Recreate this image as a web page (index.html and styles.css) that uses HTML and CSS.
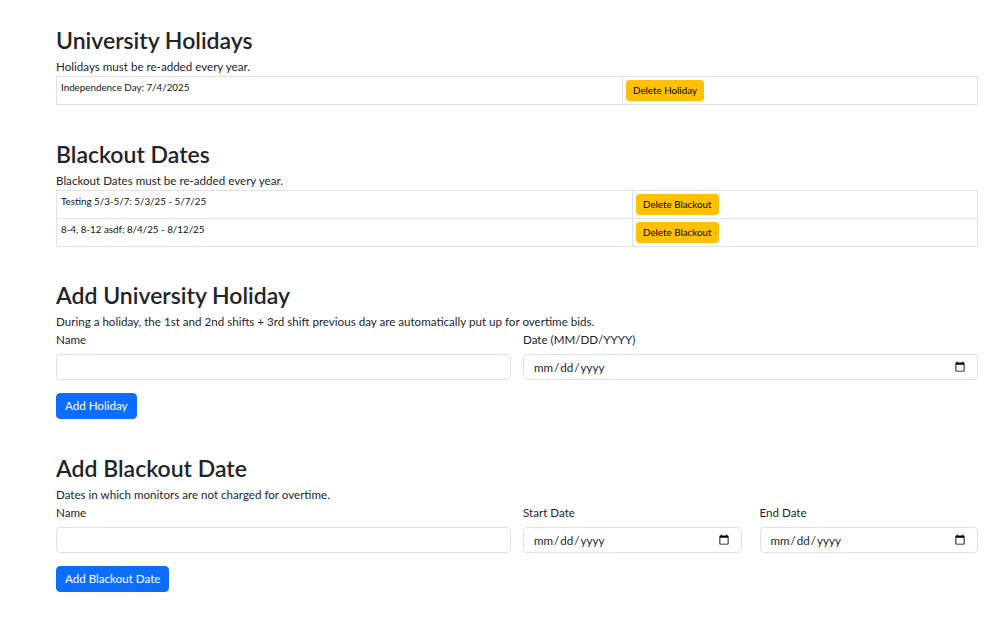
FILE: index.html
```html
<!DOCTYPE html>
<html lang="en">
<head>
<meta charset="utf-8">
<title>Holidays</title>
<link rel="stylesheet" href="styles.css">
</head>
<body>
<main class="container">
  <section class="block">
    <h2>University Holidays</h2>
    <p class="note">Holidays must be re-added every year.</p>
    <table class="list">
      <tr>
        <td class="c-holiday">Independence Day: 7/4/2025</td>
        <td><button class="btn btn-warn">Delete Holiday</button></td>
      </tr>
    </table>
  </section>

  <section class="block">
    <h2>Blackout Dates</h2>
    <p class="note">Blackout Dates must be re-added every year.</p>
    <table class="list">
      <tr>
        <td class="c-blackout">Testing 5/3-5/7: 5/3/25 - 5/7/25</td>
        <td><button class="btn btn-warn">Delete Blackout</button></td>
      </tr>
      <tr>
        <td class="c-blackout">8-4, 8-12 asdf: 8/4/25 - 8/12/25</td>
        <td><button class="btn btn-warn">Delete Blackout</button></td>
      </tr>
    </table>
  </section>

  <section class="block block-tight">
    <h2>Add University Holiday</h2>
    <p class="note">During a holiday, the 1st and 2nd shifts + 3rd shift previous day are automatically put up for overtime bids.</p>
    <form class="form">
      <div class="row two">
        <div class="field">
          <label for="hname">Name</label>
          <input id="hname" class="control" type="text">
        </div>
        <div class="field">
          <label for="hdate">Date (MM/DD/YYYY)</label>
          <input id="hdate" class="control" type="date">
        </div>
      </div>
      <button type="button" class="btn btn-primary">Add Holiday</button>
    </form>
  </section>

  <section class="block">
    <h2>Add Blackout Date</h2>
    <p class="note">Dates in which monitors are not charged for overtime.</p>
    <form class="form">
      <div class="row two">
        <div class="field">
          <label for="bname">Name</label>
          <input id="bname" class="control" type="text">
        </div>
        <div class="row pair">
          <div class="field">
            <label for="bstart">Start Date</label>
            <input id="bstart" class="control" type="date">
          </div>
          <div class="field">
            <label for="bend">End Date</label>
            <input id="bend" class="control" type="date">
          </div>
        </div>
      </div>
      <button type="button" class="btn btn-primary">Add Blackout Date</button>
    </form>
  </section>
</main>
</body>
</html>
```

FILE: styles.css
```css
* { box-sizing: border-box; }

html, body {
  margin: 0;
  background: #ffffff;
}

body {
  font-family: Lato, "Noto Sans", "Liberation Sans", sans-serif;
  font-size: 11.6px;
  line-height: 1.5;
  color: #212529;
}

.container {
  width: 922px;
  margin-left: 56px;
  padding-top: 26px;
}

.block {
  margin-bottom: 35px;
}

.block-tight {
  margin-top: -1px;
}

h2 {
  margin: 0;
  font-size: 23px;
  font-weight: 600;
  line-height: 29px;
}

.note {
  margin: 2px 0 0 0;
  line-height: 19px;
}

.list {
  width: 100%;
  border-collapse: collapse;
  font-size: 9.8px;
  line-height: 15px;
  color: #111;
}

.list td {
  border: 1px solid #dee2e6;
  padding: 3px 3px 3px 3px;
  vertical-align: top;
}

.list td:first-child {
  padding-left: 4px;
  padding-top: 3px;
}

.c-holiday { width: 566px; }
.c-blackout { width: 576px; }

.btn {
  display: inline-block;
  font-family: inherit;
  border: 1px solid transparent;
  cursor: pointer;
}

.btn-warn {
  background: #ffc107;
  border-color: #ffc107;
  color: #000;
  font-size: 9.8px;
  line-height: 15px;
  height: 21px;
  padding: 2px 6px;
  border-radius: 3px;
  vertical-align: top;
}

.btn-primary {
  background: #0d6efd;
  border-color: #0d6efd;
  color: #fff;
  font-size: 11.6px;
  line-height: 18px;
  height: 26px;
  padding: 3px 8px;
  border-radius: 4px;
}

.form {
  margin: 0;
}

.row {
  display: grid;
}

.two {
  grid-template-columns: 1fr 1fr;
  column-gap: 12px;
}

.pair {
  grid-template-columns: 1fr 1fr;
  column-gap: 18px;
}

.field {
  display: flex;
  flex-direction: column;
}

label {
  line-height: 17px;
  margin-bottom: 6px;
}

.control {
  height: 26px;
  width: 100%;
  border: 1px solid #dee2e6;
  border-radius: 4px;
  padding: 0 9px;
  font-family: inherit;
  font-size: 11.6px;
  color: #212529;
  background: #fff;
}

.form .btn-primary {
  margin-top: 13px;
}
```
